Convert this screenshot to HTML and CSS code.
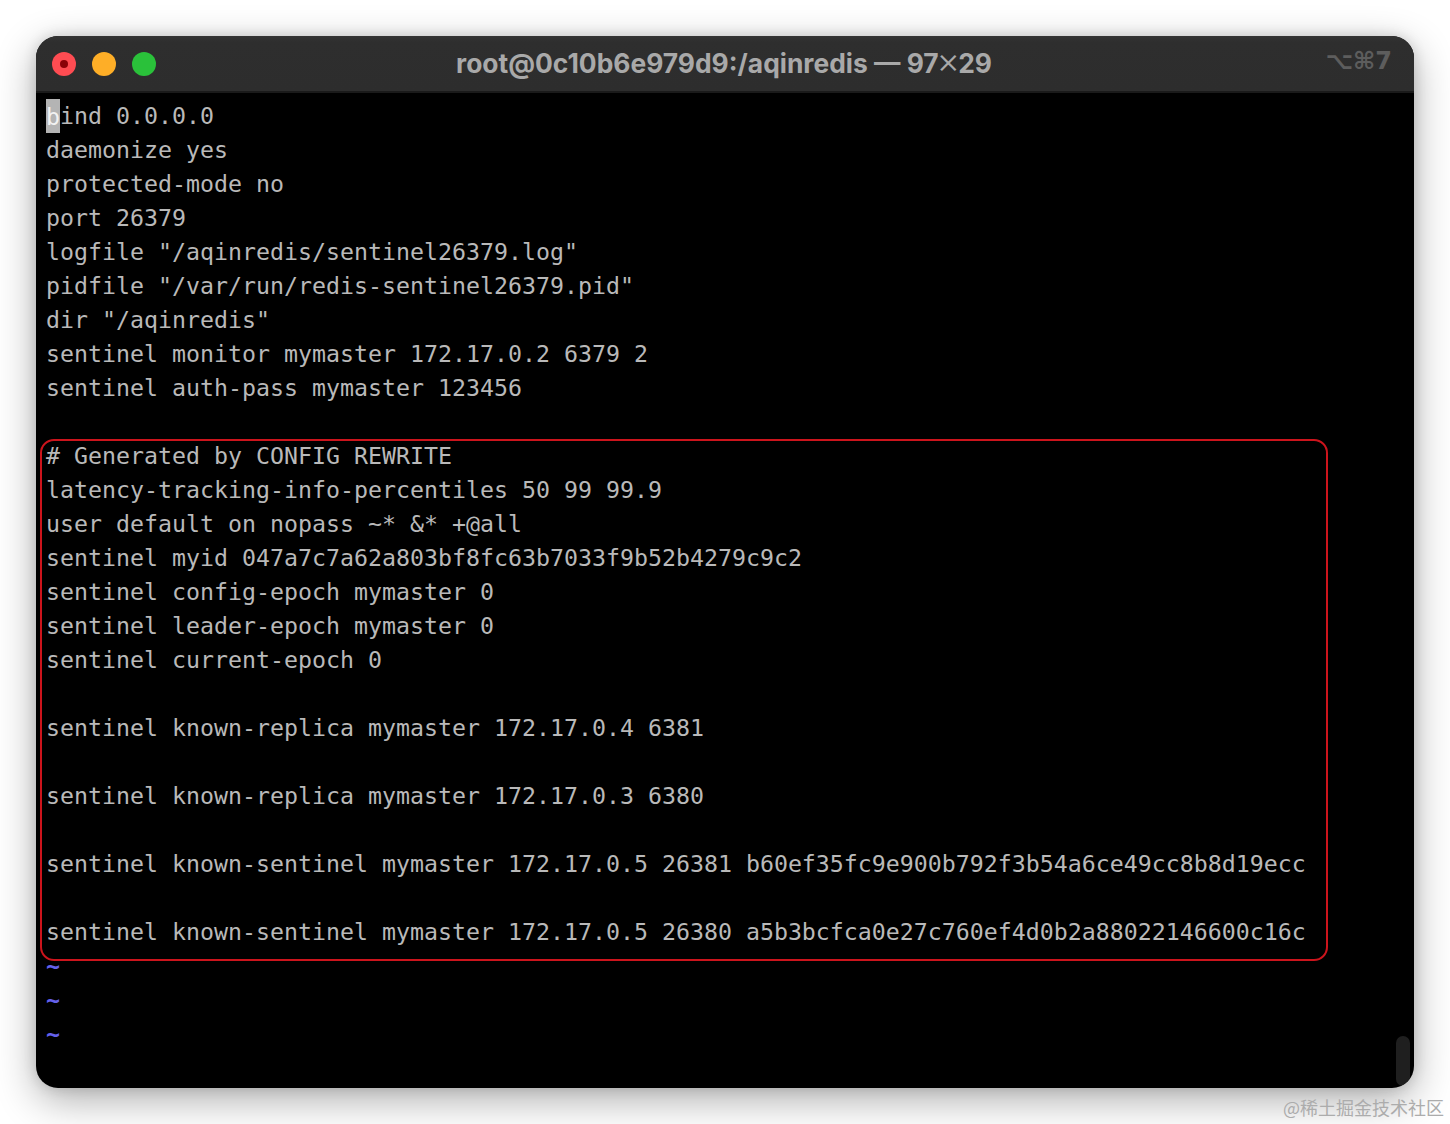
FILE: index.html
```html
<!DOCTYPE html>
<html lang="en">
<head>
<meta charset="utf-8">
<title>Terminal</title>
<link rel="stylesheet" href="styles.css">
</head>
<body>
<main class="window">
  <header class="titlebar">
    <div class="lights">
      <span class="light red"><i></i></span>
      <span class="light orange"></span>
      <span class="light green"></span>
    </div>
    <div class="title">root@0c10b6e979d9:/aqinredis — 97<span class="times">×</span>29</div>
    <div class="shortcut">⌥⌘7</div>
  </header>
  <div class="term">
    <div class="line"><span class="cursor">b</span>ind 0.0.0.0</div>
    <div class="line">daemonize yes</div>
    <div class="line">protected-mode no</div>
    <div class="line">port 26379</div>
    <div class="line">logfile "/aqinredis/sentinel26379.log"</div>
    <div class="line">pidfile "/var/run/redis-sentinel26379.pid"</div>
    <div class="line">dir "/aqinredis"</div>
    <div class="line">sentinel monitor mymaster 172.17.0.2 6379 2</div>
    <div class="line">sentinel auth-pass mymaster 123456</div>
    <div class="line"></div>
    <div class="line"># Generated by CONFIG REWRITE</div>
    <div class="line">latency-tracking-info-percentiles 50 99 99.9</div>
    <div class="line">user default on nopass ~* &amp;* +@all</div>
    <div class="line">sentinel myid 047a7c7a62a803bf8fc63b7033f9b52b4279c9c2</div>
    <div class="line">sentinel config-epoch mymaster 0</div>
    <div class="line">sentinel leader-epoch mymaster 0</div>
    <div class="line">sentinel current-epoch 0</div>
    <div class="line"></div>
    <div class="line">sentinel known-replica mymaster 172.17.0.4 6381</div>
    <div class="line"></div>
    <div class="line">sentinel known-replica mymaster 172.17.0.3 6380</div>
    <div class="line"></div>
    <div class="line">sentinel known-sentinel mymaster 172.17.0.5 26381 b60ef35fc9e900b792f3b54a6ce49cc8b8d19ecc</div>
    <div class="line"></div>
    <div class="line">sentinel known-sentinel mymaster 172.17.0.5 26380 a5b3bcfca0e27c760ef4d0b2a88022146600c16c</div>
    <div class="line tilde">~</div>
    <div class="line tilde">~</div>
    <div class="line tilde">~</div>
  </div>
  <div class="highlight"></div>
  <div class="scrollbar"></div>
</main>
<div class="watermark">@稀土掘金技术社区</div>
</body>
</html>
```
FILE: styles.css
```css
* { box-sizing: border-box; }
html, body { margin: 0; padding: 0; }
body {
  width: 1450px;
  height: 1124px;
  padding: 36px;
  background: #fff;
  overflow: hidden;
  position: relative;
}
.window {
  position: relative;
  width: 1378px;
  height: 1052px;
  background: #000;
  border-radius: 22px;
  box-shadow: 0 12px 40px rgba(0, 0, 0, .32), 0 0 14px rgba(0, 0, 0, .14);
  overflow: hidden;
}
.titlebar {
  position: relative;
  height: 57px;
  display: flex;
  align-items: center;
  justify-content: center;
  background: linear-gradient(#353535 0, #2e2e2e 6px, #2d2d2d 100%);
  border-bottom: 2px solid #1a1a1a;
}
.lights {
  position: absolute;
  left: 16px;
  top: 16px;
  display: flex;
  gap: 16px;
}
.light {
  width: 24px;
  height: 24px;
  border-radius: 50%;
  display: flex;
  align-items: center;
  justify-content: center;
}
.light i {
  width: 8px;
  height: 8px;
  border-radius: 50%;
  background: #8a0208;
}
.red { background: #fe4c52; }
.orange { background: #feae27; }
.green { background: #2ac13a; }
.title {
  font-family: Inter, "Liberation Sans", sans-serif;
  font-weight: 700;
  font-size: 26.4px;
  color: #a9a9a9;
  white-space: pre;
  display: flex;
  align-items: center;
  transform: translate(-1px, -1px);
}
.times {
  font-weight: 300;
  font-size: 36px;
  line-height: 30px;
  margin: 0 -2px;
  transform: translateY(-3px);
}
.shortcut {
  position: absolute;
  right: 22px;
  top: 11px;
  font-family: "DejaVu Sans", sans-serif;
  font-weight: 700;
  font-size: 24px;
  color: #5d5d5d;
}
.term {
  padding: 6px 0 0 10px;
  font-family: "DejaVu Sans Mono", monospace;
  font-size: 23.25px;
  line-height: 34px;
  color: #b9b9b9;
}
.line {
  height: 34px;
  white-space: pre;
}
.cursor {
  padding: 3.5px 0;
  background: #b4b4b4;
  color: #f2f2f2;
}
.tilde { color: #6460ea; font-weight: 700; }
.highlight {
  position: absolute;
  left: 4px;
  top: 403px;
  width: 1288px;
  height: 522px;
  border: 2px solid #cc141c;
  border-radius: 14px;
}
.scrollbar {
  position: absolute;
  left: 1360px;
  top: 1000px;
  width: 14px;
  height: 50px;
  border-radius: 7px;
  background: #1f1f1f;
}
.watermark {
  position: absolute;
  right: 6px;
  top: 1095px;
  font-family: "Noto Sans CJK SC", sans-serif;
  font-size: 18px;
  line-height: 24px;
  color: #acacac;
  white-space: nowrap;
}
```
